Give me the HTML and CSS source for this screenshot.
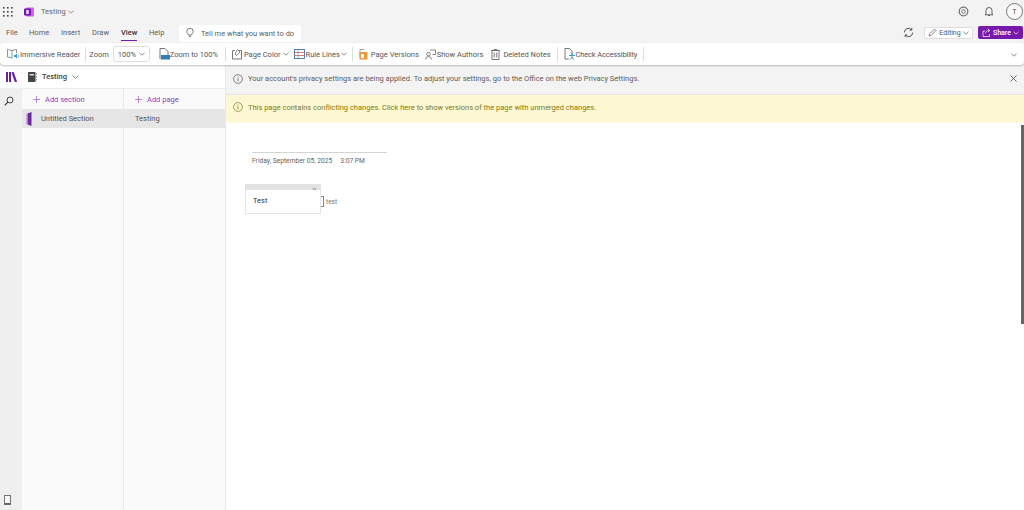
FILE: index.html
```html
<!DOCTYPE html>
<html lang="en">
<head>
<meta charset="utf-8">
<title>Testing - OneNote</title>
<link rel="stylesheet" href="styles.css">
</head>
<body>
<div class="app">
  <header class="titlebar">
    <svg class="waffle" width="10" height="10" viewBox="0 0 10 10"><g fill="#444"><rect x="0" y="0" width="1.600" height="1.600"/><rect x="4" y="0" width="1.600" height="1.600"/><rect x="8" y="0" width="1.600" height="1.600"/><rect x="0" y="4" width="1.600" height="1.600"/><rect x="4" y="4" width="1.600" height="1.600"/><rect x="8" y="4" width="1.600" height="1.600"/><rect x="0" y="8" width="1.600" height="1.600"/><rect x="4" y="8" width="1.600" height="1.600"/><rect x="8" y="8" width="1.600" height="1.600"/></g></svg>
    <svg class="logo" width="10" height="10" viewBox="0 0 10 10"><rect x="2" y="0.5" width="8" height="9" rx="1" fill="#ca64ea"/><rect x="0" y="1.5" width="7" height="7" rx="1" fill="#7719aa"/><rect x="2.200" y="3" width="2.600" height="4" fill="#e8d4f2"/></svg>
    <span class="doc-title">Testing</span>
    <svg class="chev" width="6" height="4" viewBox="0 0 6 4"><path d="M.5.800 3 3.200 5.500.8" fill="none" stroke="#777" stroke-width=".8"/></svg>
    <div class="title-right">
      <svg width="11" height="11" viewBox="0 0 11 11"><circle cx="5.500" cy="5.500" r="4.300" fill="none" stroke="#777" stroke-width="1.300"/><circle cx="5.500" cy="5.500" r="1.800" fill="none" stroke="#777" stroke-width="1"/></svg>
      <svg class="bell" width="10" height="11" viewBox="0 0 10 11"><path d="M2 8V4.500a3 3 0 0 1 6 0V8l1 .8H1ZM4 9.500h2" fill="none" stroke="#555" stroke-width=".9"/></svg>
      <span class="avatar">T</span>
    </div>
  </header>

  <div class="tabs">
    <nav class="tablist">
      <span class="tab">File</span>
      <span class="tab">Home</span>
      <span class="tab">Insert</span>
      <span class="tab">Draw</span>
      <span class="tab tab-active">View</span>
      <span class="tab">Help</span>
    </nav>
    <div class="tell">
      <svg width="8" height="10" viewBox="0 0 8 10"><path d="M2.500 7C2.300 5.800.8 5.200.8 3.500a3.200 3.200 0 0 1 6.400 0C7.200 5.200 5.700 5.800 5.500 7ZM3 8.500h2" fill="none" stroke="#555" stroke-width=".8"/></svg>
      <span>Tell me what you want to do</span>
    </div>
    <div class="tabs-right">
      <svg width="11" height="11" viewBox="0 0 11 11"><path d="M1.300 5.500a4.200 4.200 0 0 1 7.300-2.800M9.700 5.500a4.200 4.200 0 0 1-7.300 2.800" fill="none" stroke="#444" stroke-width=".9"/><path d="M8.800.9v2.200H6.600M2.200 10.100V7.900h2.200" fill="none" stroke="#444" stroke-width=".9"/></svg>
      <span class="btn-editing">
        <svg width="9" height="9" viewBox="0 0 9 9"><path d="M1 8 1.500 6 6.500 1 8 2.500 3 7.500Z" fill="none" stroke="#555" stroke-width=".7"/></svg>
        Editing
        <svg width="6" height="4" viewBox="0 0 6 4"><path d="M.5.800 3 3.200 5.500.8" fill="none" stroke="#555" stroke-width=".7"/></svg>
      </span>
      <span class="btn-share">
        <svg width="9" height="9" viewBox="0 0 9 9"><path d="M3 3H1v5.500h6.500V6M3.500 5.500C3.500 3.500 5 2.500 7 2.500M5.800.8 7.800 2.500 5.800 4.200" fill="none" stroke="#fff" stroke-width=".7"/></svg>
        Share
        <svg width="6" height="4" viewBox="0 0 6 4"><path d="M.5.800 3 3.200 5.500.8" fill="none" stroke="#fff" stroke-width=".7"/></svg>
      </span>
    </div>
  </div>

  <div class="ribbon">
    <span class="rb-item rb-first">
      <svg width="13" height="12" viewBox="0 0 13 12"><path d="M.5 1.500 5 2.500V10L.5 9ZM5 2.500 9.500 1.500V5" fill="none" stroke="#666" stroke-width=".7"/><path d="M7 7v2h1.500L10 10.500v-5L8.500 7Z" fill="#3f97d8"/><path d="M11 6.500a2 2 0 0 1 0 3" fill="none" stroke="#3f97d8" stroke-width=".7"/></svg>
      Immersive Reader
    </span>
    <i class="sep sep-a"></i>
    <span class="rb-label">Zoom</span>
    <span class="zoom-select">100%
      <svg width="6" height="4" viewBox="0 0 6 4"><path d="M.5.800 3 3.200 5.500.8" fill="none" stroke="#555" stroke-width=".7"/></svg>
    </span>
    <span class="rb-item rb-zoom">
      <svg width="11" height="12" viewBox="0 0 11 12"><path d="M1 11V.5h5L9 3.500V7" fill="none" stroke="#555" stroke-width=".8"/><rect x="2" y="7" width="9" height="4.500" fill="#2f7dbd"/></svg>
      Zoom to 100%
    </span>
    <i class="sep sep-b"></i>
    <span class="rb-item rb-color">
      <svg width="10" height="12" viewBox="0 0 10 12"><path d="M1 2.500h2M7 2.500h2.500V11H.5V2.500" fill="none" stroke="#555" stroke-width=".8"/><path d="M3 6 5.500 1.500 8 4 5 7.500Z" fill="none" stroke="#555" stroke-width=".7"/></svg>
      Page Color
      <svg width="6" height="4" viewBox="0 0 6 4"><path d="M.5.800 3 3.200 5.500.8" fill="none" stroke="#555" stroke-width=".7"/></svg>
    </span>
    <span class="rb-item rb-rule">
      <svg width="11" height="10" viewBox="0 0 11 10"><rect x=".5" y=".5" width="10" height="9" fill="#fff" stroke="#2f5f9e" stroke-width=".8"/><path d="M.5 3.500h10M.5 6.500h10" stroke="#d4574f" stroke-width=".8"/><path d="M4 .5v9" stroke="#6f8fc0" stroke-width=".7"/></svg>
      Rule Lines
      <svg width="6" height="4" viewBox="0 0 6 4"><path d="M.5.800 3 3.200 5.500.8" fill="none" stroke="#555" stroke-width=".7"/></svg>
    </span>
    <i class="sep sep-c"></i>
    <span class="rb-item rb-ver">
      <svg width="9" height="12" viewBox="0 0 9 12"><path d="M1 9V1.500h4" fill="none" stroke="#888" stroke-width=".8"/><rect x=".5" y="4" width="8" height="7.500" rx=".5" fill="#ec9a3c"/><rect x="2" y="6" width="3" height="4" fill="#fff"/></svg>
      Page Versions
    </span>
    <span class="rb-item rb-auth">
      <svg width="11" height="11" viewBox="0 0 11 11"><circle cx="3.500" cy="5" r="1.800" fill="none" stroke="#555" stroke-width=".7"/><path d="M.5 10.500a3 3 0 0 1 6 0M5 1h5.500v4.500H7.500" fill="none" stroke="#555" stroke-width=".7"/></svg>
      Show Authors
    </span>
    <span class="rb-item rb-del">
      <svg width="9" height="11" viewBox="0 0 9 11"><path d="M.2 1.500h8.600M3 1.500V.5h3v1M1 1.500v9h7v-9M3.200 3.500v5M5.800 3.500v5" fill="none" stroke="#555" stroke-width=".8"/></svg>
      Deleted Notes
    </span>
    <i class="sep"></i>
    <span class="rb-item rb-acc">
      <svg width="11" height="12" viewBox="0 0 11 12"><path d="M5 11H1V.5h4.500L8 3v2" fill="none" stroke="#555" stroke-width=".8"/><circle cx="8" cy="6" r="1" fill="#3f97d8"/><path d="M5 7.500h6M8 7v2L6.500 11.500M8 9l1.500 2.500" fill="none" stroke="#3f97d8" stroke-width="1"/></svg>
      Check Accessibility
    </span>
    <i class="sep"></i>
    <svg class="rb-collapse" width="6" height="4" viewBox="0 0 6 4"><path d="M.5.800 3 3.200 5.500.8" fill="none" stroke="#555" stroke-width=".7"/></svg>
  </div>

  <main class="main">
    <aside class="rail">
      <div class="rail-top">
        <svg width="11" height="10" viewBox="0 0 11 10"><path d="M1 0v10M4 0v10" stroke="#6b1f9c" stroke-width="2"/><path d="M6.500 .2 10 10" stroke="#6b1f9c" stroke-width="2.200"/></svg>
      </div>
      <div class="rail-search">
        <svg width="10" height="10" viewBox="0 0 10 10"><circle cx="6" cy="4" r="3" fill="none" stroke="#333" stroke-width=".9"/><path d="M3.800 6.200.8 9.300" stroke="#333" stroke-width="1.100"/></svg>
      </div>
      <div class="rail-phone">
        <svg width="7" height="10" viewBox="0 0 7 10"><rect x=".5" y=".5" width="6" height="9" fill="#f7f7f7" stroke="#666" stroke-width=".9"/><rect x=".5" y="8" width="6" height="1.500" fill="#666"/></svg>
      </div>
    </aside>

    <div class="navpane">
      <div class="nb-head">
        <svg width="9" height="10" viewBox="0 0 9 10"><rect width="7.500" height="10" rx=".8" fill="#444"/><rect x="1.500" y="2" width="4.500" height="1.500" fill="#ddd"/><path d="M8.500 1v1.500M8.500 4v1.500M8.500 7v1.500" stroke="#666" stroke-width=".7"/></svg>
        <span class="nb-name">Testing</span>
        <svg width="7" height="4" viewBox="0 0 7 4"><path d="M.5.500 3.500 3.500 6.500.5" fill="none" stroke="#555" stroke-width=".7"/></svg>
      </div>
      <div class="columns">
        <section class="col col-sections">
          <div class="add-row">
            <svg width="7" height="7" viewBox="0 0 7 7"><path d="M3.500 0v7M0 3.500h7" stroke="#9a5cc0" stroke-width=".7"/></svg>
            <span>Add section</span>
          </div>
          <div class="list-row section-row">
            <svg width="6" height="14" viewBox="0 0 6 14"><path d="M1.500 1.500 5.500 0V14L1.500 12.500Z" fill="#6b2a9c"/><path d="M0.500 1.500v11" stroke="#c9a8dc"/></svg>
            <span>Untitled Section</span>
          </div>
        </section>
        <section class="col col-pages">
          <div class="add-row">
            <svg width="7" height="7" viewBox="0 0 7 7"><path d="M3.500 0v7M0 3.500h7" stroke="#9a5cc0" stroke-width=".7"/></svg>
            <span>Add page</span>
          </div>
          <div class="list-row page-row"><span>Testing</span></div>
        </section>
      </div>
    </div>

    <div class="content">
      <div class="banner banner-gray">
        <svg width="10" height="10" viewBox="0 0 10 10"><circle cx="5" cy="5" r="4.400" fill="none" stroke="#555" stroke-width=".7"/><path d="M5 4.300v3M5 2.500v1" stroke="#555" stroke-width=".8"/></svg>
        <span class="banner-text">Your account's privacy settings are being applied. To adjust your settings, go to the Office on the web Privacy Settings.</span>
        <svg class="close" width="7" height="7" viewBox="0 0 7 7"><path d="M.5.500l6 6M6.500.500l-6 6" stroke="#444" stroke-width=".8"/></svg>
      </div>
      <div class="banner banner-yellow">
        <svg width="10" height="10" viewBox="0 0 10 10"><circle cx="5" cy="5" r="4.400" fill="none" stroke="#7f7a10" stroke-width=".7"/><path d="M5 4.300v3M5 2.500v1" stroke="#7f7a10" stroke-width=".8"/></svg>
        <span class="banner-text">This page contains conflicting changes. Click here to show versions of the page with unmerged changes.</span>
      </div>
      <div class="canvas">
        <div class="page-title-line"></div>
        <div class="page-date"><span>Friday, September 05, 2025</span><span>3:07 PM</span></div>
        <div class="outline">
          <div class="outline-handle"><span>‹›</span></div>
          <div class="outline-body">Test</div>
        </div>
        <div class="tag-bracket"></div>
        <div class="tag-text">test</div>
        <div class="scrollbar"></div>
      </div>
    </div>
  </main>
</div>
</body>
</html>
```
FILE: styles.css
```css
* { box-sizing: border-box; }
html, body { margin: 0; padding: 0; }
body {
  width: 1024px;
  height: 510px;
  overflow: hidden;
  background: #f3f3f3;
  font-family: Roboto, "Open Sans", sans-serif;
  font-size: 7.500px;
  color: #555;
}
svg { display: block; flex: none; }
.app { display: flex; flex-direction: column; height: 510px; }

.titlebar { height: 22px; display: flex; align-items: center; padding: 1px 0 0 3px; }
.logo { margin-left: 11px; }
.doc-title { margin-left: 7px; color: #666; }
.titlebar .chev { margin-left: 2px; margin-top: 1px; }
.title-right { margin-left: auto; display: flex; align-items: center; padding-right: 1px; }
.bell { margin-left: 15px; }
.avatar {
  width: 17px; height: 17px; margin-left: 12px;
  border: 1px solid #777; border-radius: 50%;
  display: flex; align-items: center; justify-content: center;
  font-size: 6.500px; color: #5a3a1a; background: #fafafa;
}

.tabs { height: 21px; display: flex; align-items: center; }
.tablist { display: flex; padding-left: 6px; }
.tab { color: #5c5c5c; height: 21px; line-height: 21px; }
.tab:nth-child(1) { width: 23px; }
.tab:nth-child(2) { width: 32px; }
.tab:nth-child(3) { width: 31px; }
.tab:nth-child(4) { width: 29px; }
.tab:nth-child(5) { width: 28px; }
.tab:nth-child(6) { width: 30px; }
.tab-active { color: #333; font-weight: 500; position: relative; }
.tab-active::after {
  content: ""; position: absolute; left: 0; width: 16px; bottom: 2px;
  height: 1px; background: #7719aa;
}
.tell {
  width: 122px; height: 17px; margin-top: 1px;
  background: #fff; border-radius: 3px;
  display: flex; align-items: center; gap: 7px; padding-left: 7px;
  color: #5c5c5c; white-space: nowrap;
}
.tabs-right { margin-left: auto; display: flex; align-items: center; padding-right: 1px; }
.btn-editing {
  margin-left: 10px; width: 49px; height: 12px;
  background: #fff; border: 1px solid #ddd; border-radius: 2px;
  display: flex; align-items: center; justify-content: center; gap: 2px;
  font-size: 7px; color: #555;
}
.btn-share {
  margin-left: 5px; width: 45px; height: 13px;
  background: #7719aa; border-radius: 2px;
  display: flex; align-items: center; justify-content: center; gap: 2px;
  font-size: 7px; font-weight: 500; color: #fff;
}

.ribbon {
  height: 22px; background: #fff; border-radius: 4px;
  box-shadow: 0 1px 2px rgba(0, 0, 0, .25);
  display: flex; align-items: center; padding-left: 7px;
  position: relative; color: #555;
}
.rb-item { display: flex; align-items: center; gap: 1px; white-space: nowrap; }
.rb-first { gap: 0; }
.sep { width: 1px; height: 14px; background: #ddd; flex: none; margin: 0 6px; }
.sep-a { margin: 0 3px 0 5px; }
.sep-b { margin-left: 7px; }
.sep-c { margin-left: 5px; }
.zoom-select {
  margin-left: 4px; width: 37px; height: 16px;
  border: 1px solid #ddd; border-radius: 3px;
  display: flex; align-items: center; justify-content: space-between;
  padding: 0 4px 0 4px;
}
.rb-zoom { margin-left: 9px; gap: 0; }
.rb-color { gap: 2px; }
.rb-rule { margin-left: 5px; gap: 1px; }
.rb-ver { gap: 3px; }
.rb-auth { margin-left: 6px; gap: 1px; }
.rb-del { margin-left: 8px; gap: 3px; }
.rb-acc { gap: 1px; letter-spacing: -.15px; }
.rb-collapse { margin-left: auto; margin-right: 7px; margin-top: 2px; }

.main { flex: 1; display: flex; min-height: 0; }
.rail { width: 22px; background: #efefef; display: flex; flex-direction: column; }
.rail-top { height: 23px; background: #fff; display: flex; align-items: center; justify-content: center; }
.rail-search { height: 25px; display: flex; align-items: center; padding-left: 4px; }
.rail-phone { margin-top: auto; height: 17px; padding: 0 0 3px 4px; display: flex; align-items: center; }

.navpane { width: 204px; background: #fafafa; display: flex; flex-direction: column; border-right: 1px solid #e8e8e8; }
.nb-head {
  height: 24px; background: #fff; border-bottom: 1px solid #ececec;
  display: flex; align-items: center; padding: 0 0 0 6px;
}
.nb-name { margin-left: 5px; font-weight: 500; color: #444; }
.nb-head svg:last-child { margin-left: 5px; }
.columns { flex: 1; display: flex; }
.col { display: flex; flex-direction: column; }
.col-sections { width: 102px; border-right: 1px solid #e8e8e8; }
.col-pages { width: 101px; }
.add-row {
  height: 20px; display: flex; align-items: center; gap: 5px;
  color: #8a3fb8; padding-left: 11px;
}
.list-row { height: 19px; background: #e6e6e6; display: flex; align-items: center; color: #555; }
.section-row { padding-left: 4px; gap: 9px; }
.page-row { padding-left: 11px; }

.content { flex: 1; min-width: 0; display: flex; flex-direction: column; background: #fff; }
.banner { display: flex; align-items: center; flex: none; padding-left: 7px; }
.banner-text { margin-left: 5px; white-space: nowrap; }
.banner-gray {
  height: 30px; padding-bottom: 2px; background: #f3f3f3; color: #5c5c5c;
  border-bottom: 1px solid #e6e6e6; border-top-left-radius: 4px;
}
.close { margin-left: auto; margin-right: 7px; }
.banner-yellow { height: 28px; padding-bottom: 4px; background: #fdf8d3; color: #7f7a10; border-bottom-left-radius: 4px; }

.canvas { flex: 1; position: relative; }
.page-title-line { position: absolute; left: 26px; top: 29px; width: 135px; height: 1px; background: #d5d5d5; }
.page-date { position: absolute; left: 26px; top: 34px; display: flex; gap: 8px; font-size: 6.700px; color: #666; white-space: nowrap; }
.outline { position: absolute; left: 19px; top: 61px; width: 76px; height: 30px; border: 1px solid #e4e4e4; background: #fff; }
.outline-handle { height: 5px; background: #e3e3e3; display: flex; justify-content: flex-end; padding-right: 4px; font-size: 6px; line-height: 5px; color: #444; }
.outline-body { padding: 5px 0 0 7px; color: #334; font-size: 7.500px; line-height: 11px; }
.tag-bracket { position: absolute; left: 95px; top: 73px; width: 3px; height: 11px; border: 1px solid #888; border-left: 0; }
.tag-text { position: absolute; left: 100px; top: 74px; font-size: 6.500px; line-height: 10px; color: #777; }
.scrollbar { position: absolute; right: 0; top: 2px; width: 3px; height: 199px; background: #666; }
```
